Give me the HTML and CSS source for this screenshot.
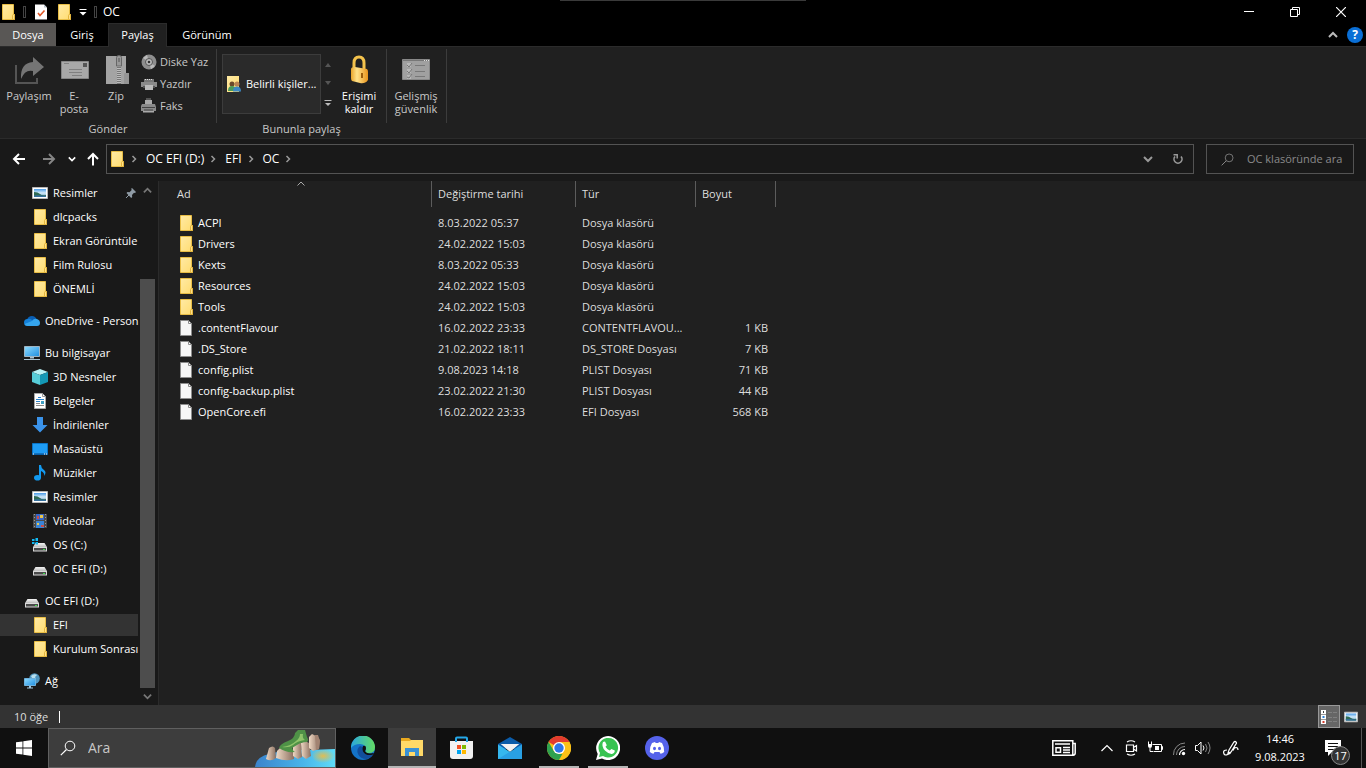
FILE: index.html
```
<!DOCTYPE html>
<html lang="tr">
<head>
    <meta charset="UTF-8">
    <meta name="viewport" content="width=device-width, initial-scale=1.0">
    <title>OC</title>
    <link rel="stylesheet" href="styles.css">
</head>
<body>
    <!-- Shared icons -->
    <svg class="sprite" aria-hidden="true">
        <defs>
            <linearGradient id="gFolder" x1="0" y1="0" x2="1" y2="1">
                <stop offset="0" stop-color="#ffeaa5"/><stop offset="1" stop-color="#ffdc70"/>
            </linearGradient>
            <linearGradient id="gScreen" x1="0" y1="0" x2="1" y2="1">
                <stop offset="0" stop-color="#8fdcff"/><stop offset="1" stop-color="#1e8ee0"/>
            </linearGradient>
            <linearGradient id="gSky" x1="0" y1="0" x2="0" y2="1">
                <stop offset="0" stop-color="#4a9be8"/><stop offset="0.5" stop-color="#d5ecfa"/><stop offset="1" stop-color="#5b93b8"/>
            </linearGradient>
            <linearGradient id="gLock" x1="0" y1="0" x2="1" y2="0">
                <stop offset="0" stop-color="#e9a52b"/><stop offset="0.35" stop-color="#ffe28a"/><stop offset="1" stop-color="#e8941c"/>
            </linearGradient>
            <linearGradient id="gDrive" x1="0" y1="0" x2="0" y2="1">
                <stop offset="0" stop-color="#f4f4f4"/><stop offset="1" stop-color="#bdbdbd"/>
            </linearGradient>
        </defs>
        <symbol id="folder" viewBox="0 0 16 16">
            <path d="M2.500.5h11v10h.9v5H2.500z" fill="url(#gFolder)" stroke="#e8bd45"/>
            <path d="M12.500 15.500v-4q0-1 1-1h1v5z" fill="#ffe08a" stroke="#e3b53c"/>
        </symbol>
        <symbol id="file" viewBox="0 0 16 16">
            <path d="M2.500.5h8l3 3v12h-11z" fill="#f7f7f7" stroke="#8d8d8d"/>
            <path d="M10.500.5v3h3z" fill="#fff" stroke="#8d8d8d"/>
        </symbol>
        <symbol id="picture" viewBox="0 0 16 16">
            <path d="M.5 2.500h15v11H.5z" fill="#fff" stroke="#b8b8b8"/>
            <path d="M2 4h12v8H2z" fill="url(#gSky)"/>
            <path d="M2 7q4 0 6 2t6 1v2H2z" fill="#2f6b55"/>
            <path d="M2 10.500q5-.5 12 .5v1H2z" fill="#346f9d"/>
        </symbol>
        <symbol id="drive" viewBox="0 0 16 16">
            <path d="M3.500 6h9l2.500 4H1z" fill="url(#gDrive)"/>
            <path d="M1 10h14v4.500H1z" fill="#d9d9d9"/>
            <path d="M2 11h12v2.500H2z" fill="#4a4a4a"/>
            <path d="M11 12h2v1h-2z" fill="#3fe04b"/>
        </symbol>
        <symbol id="chevron" viewBox="0 0 8 8">
            <path d="M2.500 1l3 3-3 3" fill="none" stroke="currentColor" stroke-width="1.500"/>
        </symbol>
        <symbol id="search" viewBox="0 0 16 16">
            <circle cx="10" cy="6" r="4.800" fill="none" stroke="currentColor"/>
            <path d="M6.500 9.500L.8 15.200" stroke="currentColor" stroke-width="1.200"/>
        </symbol>
        <symbol id="up" viewBox="0 0 10 10">
            <path d="M1 7l4-4 4 4" fill="none" stroke="currentColor" stroke-width="2"/>
        </symbol>
        <symbol id="down" viewBox="0 0 10 10">
            <path d="M1 3l4 4 4-4" fill="none" stroke="currentColor" stroke-width="2"/>
        </symbol>
    </svg>

    <header class="titlebar">
        <div class="quick-access">
            <svg class="icon"><use href="#folder"/></svg>
            <span class="divider"></span>
            <button class="plain" aria-label="Özellikler">
                <svg class="icon" viewBox="0 0 16 16">
                    <path d="M2 .5h9l3 3v12H2z" fill="#fff"/><path d="M11 .5v3h3z" fill="#b9c4cc"/>
                    <path d="M5 9l2 2.500 4.500-5" fill="none" stroke="#e0592a" stroke-width="1.600"/>
                </svg>
            </button>
            <button class="plain" aria-label="Yeni klasör"><svg class="icon"><use href="#folder"/></svg></button>
            <button class="plain" aria-label="Özelleştir">
                <svg width="8" height="8" viewBox="0 0 8 8"><path d="M.5 1.500h7" stroke="#fff"/><path d="M.5 4h7L4 7.500z" fill="#fff"/></svg>
            </button>
            <span class="divider"></span>
        </div>
        <h1>OC</h1>
        <div class="window-buttons">
            <button class="plain" aria-label="Simge durumuna küçült"><svg width="10" height="10" viewBox="0 0 10 10"><path d="M0 4.500h10" stroke="#fff"/></svg></button>
            <button class="plain" aria-label="Geri yükle"><svg width="10" height="10" viewBox="0 0 10 10"><path d="M.5 2.500h7v7h-7zM2.500 2.500v-2h7v7h-2" fill="none" stroke="#fff"/></svg></button>
            <button class="plain" aria-label="Kapat"><svg width="10" height="10" viewBox="0 0 10 10"><path d="M0 0l10 10M10 0L0 10" stroke="#fff" stroke-width="1.200"/></svg></button>
        </div>
    </header>

    <nav class="tabs">
        <button class="tab tab-file">Dosya</button>
        <button class="tab tab-home">Giriş</button>
        <button class="tab tab-share active">Paylaş</button>
        <button class="tab tab-view">Görünüm</button>
        <div class="tab-tools">
            <button class="plain" aria-label="Şeridi küçült"><svg width="10" height="10"><use href="#up"/></svg></button>
            <button class="plain help" aria-label="Yardım">?</button>
        </div>
    </nav>

    <section class="ribbon">
        <div class="group group-send">
            <div class="group-body">
                <button class="big share">
                    <svg class="icon-big" viewBox="0 0 32 32">
                        <path d="M3 11v18h21v-5" fill="none" stroke="#555" stroke-width="2"/>
                        <path d="M20 3l11 10-11 9v-5Q12 15 8 25q-1-16 12-17z" fill="#757575"/>
                    </svg>
                    <span>Paylaşım</span>
                </button>
                <button class="big mail">
                    <svg class="icon-big" viewBox="0 0 32 32">
                        <path d="M3.500 7.500h27v17h-27z" fill="#a8a8a8" stroke="#858585"/>
                        <path d="M25 9h4v4h-4z" fill="#555"/>
                        <path d="M6 9.500h5M11 15.500h13M11 18.500h13M14 21.500h10" stroke="#808080"/>
                    </svg>
                    <span>E-<br>posta</span>
                </button>
                <button class="big zip">
                    <svg class="icon-big" viewBox="0 0 32 32">
                        <path d="M6 2h20v17h3v11H6z" fill="#a4a4a4"/>
                        <path d="M24 30V20q0-1 1-1h4v11z" fill="#959595"/>
                        <path d="M17 2h4v28h-4z" fill="#777"/>
                        <path d="M19 12v18" stroke="#bbb" stroke-width="4" stroke-dasharray="1 1"/>
                        <path d="M16.500 12V3.500q0-2 2.500-2t2.500 2V12z" fill="#999" stroke="#666"/>
                        <path d="M19 4v4" stroke="#555"/>
                    </svg>
                    <span>Zip</span>
                </button>
                <div class="small-buttons">
                    <button class="small">
                        <svg class="icon" viewBox="0 0 16 16">
                            <circle cx="8" cy="8" r="7.500" fill="#8e8e8e"/><path d="M8 8L2 4l4-3zM8 8l6 4-4 3z" fill="#bbb"/>
                            <circle cx="8" cy="8" r="3.500" fill="#bbb" stroke="#555"/><circle cx="8" cy="8" r="1.300" fill="#333"/>
                        </svg>
                        Diske Yaz
                    </button>
                    <button class="small">
                        <svg class="icon" viewBox="0 0 16 16">
                            <path d="M3 3h10v3H3z" fill="#777"/><path d="M4 3.500h8" stroke="#ddd" stroke-dasharray="1 1"/>
                            <path d="M0 6h16v5H0z" fill="#8a8a8a"/><path d="M2 10h12v2H2z" fill="#555"/><path d="M4 9h8v5H4z" fill="#bbb"/>
                        </svg>
                        Yazdır
                    </button>
                    <button class="small">
                        <svg class="icon" viewBox="0 0 16 16">
                            <path d="M4 2h7v5H4z" fill="#aaa"/><path d="M5 1h5" stroke="#888"/>
                            <path d="M1 6h13l1 3v4H0V8z" fill="#8a8a8a"/><path d="M1 9.500h13M3 12h9" stroke="#444"/>
                            <path d="M2 13h11v1.500H2z" fill="#aaa"/>
                        </svg>
                        Faks
                    </button>
                </div>
            </div>
            <div class="group-title">Gönder</div>
        </div>
        <div class="group group-share">
            <div class="group-body">
                <div class="gallery">
                    <button class="gallery-item">
                        <svg class="icon" viewBox="0 0 16 16">
                            <path d="M1 0h12v16H1z" fill="url(#gFolder)"/>
                            <circle cx="6" cy="8" r="2.500" fill="#6b4a2b"/><path d="M2 15q0-5 4-5t4 5z" fill="#4a9a5c"/>
                            <circle cx="11" cy="8" r="2.500" fill="#b98352"/><path d="M7 15.500q0-5 4-5t4 5z" fill="#3d89c4"/>
                        </svg>
                        Belirli kişiler...
                    </button>
                    <div class="gallery-scroll">
                        <svg width="6" height="4" viewBox="0 0 6 4"><path d="M0 4h6L3 0z" fill="#555"/></svg>
                        <svg width="6" height="4" viewBox="0 0 6 4"><path d="M0 0h6L3 4z" fill="#555"/></svg>
                        <svg width="8" height="8" viewBox="0 0 8 8"><path d="M.5 1.500h7" stroke="#bbb"/><path d="M1 4h6L4 7z" fill="#bbb"/></svg>
                    </div>
                </div>
                <button class="big unlock">
                    <svg class="icon-big" viewBox="0 0 32 32">
                        <path d="M11 15V9q0-6 5-6t5 6v8" fill="none" stroke="#f3c24c" stroke-width="3"/>
                        <path d="M8 15q0-2 4-2l12 2q1 1 1 3v8q-3 4-8 3l-8-2q-1-1-1-3z" fill="url(#gLock)"/>
                        <path d="M19 19v5" stroke="#9b5d0b" stroke-width="2"/>
                    </svg>
                    <span>Erişimi kaldır</span>
                </button>
            </div>
            <div class="group-title">Bununla paylaş</div>
        </div>
        <div class="group group-security">
            <div class="group-body">
                <button class="big security">
                    <svg class="icon-big" viewBox="0 0 32 32">
                        <path d="M2.500 5.500h27v20h-27z" fill="#a0a0a0" stroke="#888"/>
                        <path d="M3 6.500h26" stroke="#777"/><path d="M24 6.500h5" stroke="#ddd" stroke-dasharray="1 1"/>
                        <path d="M7 9h4v4H7zM7 15h4v4H7zM7 21h4v4H7z" fill="#b8b8b8"/>
                        <path d="M7 11l2 2 3-4M7 17l2 2 3-4M7 23l2 1 3-4M15 11.500h10M15 17.500h10M15 22.500h10" fill="none" stroke="#787878"/>
                    </svg>
                    <span>Gelişmiş güvenlik</span>
                </button>
            </div>
        </div>
    </section>

    <section class="address-row">
        <div class="nav-buttons">
            <button class="plain" aria-label="Geri"><svg width="14" height="14" viewBox="0 0 14 14"><path d="M13 7H2M7 2L2 7l5 5" fill="none" stroke="#fff" stroke-width="2"/></svg></button>
            <button class="plain" aria-label="İleri"><svg width="14" height="14" viewBox="0 0 14 14"><path d="M1 7h11M7 2l5 5-5 5" fill="none" stroke="#858585" stroke-width="2"/></svg></button>
            <button class="plain recent" aria-label="Son konumlar"><svg width="8" height="8"><use href="#down"/></svg></button>
            <button class="plain" aria-label="Yukarı"><svg width="14" height="14" viewBox="0 0 14 14"><path d="M7 13.500V2M2 7l5-5 5 5" fill="none" stroke="#fff" stroke-width="2"/></svg></button>
        </div>
        <div class="address">
            <svg class="icon"><use href="#folder"/></svg>
            <svg class="sep"><use href="#chevron"/></svg>
            <a href="#">OC EFI (D:)</a>
            <svg class="sep"><use href="#chevron"/></svg>
            <a href="#">EFI</a>
            <svg class="sep"><use href="#chevron"/></svg>
            <a href="#">OC</a>
            <svg class="sep"><use href="#chevron"/></svg>
            <div class="address-tools">
                <button class="plain" aria-label="Önceki konumlar"><svg width="10" height="10"><use href="#down"/></svg></button>
                <button class="plain" aria-label="Yenile"><svg width="12" height="12" viewBox="0 0 12 12"><path d="M9 3.500A4 4 0 1 1 3 3.500" fill="none" stroke="#999" stroke-width="1.600"/><path d="M1.500 1.800h3.700v3.700" fill="none" stroke="#999" stroke-width="1.500"/></svg></button>
            </div>
        </div>
        <label class="folder-search">
            <svg width="13" height="13"><use href="#search"/></svg>
            <input type="text" placeholder="OC klasöründe ara" aria-label="OC klasöründe ara">
        </label>
    </section>

    <main class="explorer">
        <aside class="sidebar">
            <div class="tree">
                <a class="node sub" href="#"><svg class="icon"><use href="#picture"/></svg><span>Resimler</span>
                    <svg class="pin" viewBox="0 0 12 12"><path d="M7 1l4 4-1 1-1-.3L7 8l.2 2-1 1L1.500 6l1-1 2 .2L6.700 3 6.200 1.800z" fill="#8f9ba5"/><path d="M4 8L1 11" stroke="#8f9ba5"/></svg>
                </a>
                <a class="node sub" href="#"><svg class="icon"><use href="#folder"/></svg><span>dlcpacks</span></a>
                <a class="node sub" href="#"><svg class="icon"><use href="#folder"/></svg><span>Ekran Görüntüle</span></a>
                <a class="node sub" href="#"><svg class="icon"><use href="#folder"/></svg><span>Film Rulosu</span></a>
                <a class="node sub" href="#"><svg class="icon"><use href="#folder"/></svg><span>ÖNEMLİ</span></a>
                <a class="node root" href="#">
                    <svg class="icon" viewBox="0 0 16 16"><path d="M3 7q1-4 5-4 3 0 4.500 3L9 11H3z" fill="#0a5fb4"/><path d="M3.500 6Q6 5 8 7l4 3-3 3H3.500Q0 13 0 9.500T3.500 6z" fill="#1480d8"/><path d="M8 8q2-3 5-2 3 1 3 4 0 3-3 3H3.500q-2 0-3-2z" fill="#35a5ee"/></svg>
                    <span>OneDrive - Person</span>
                </a>
                <a class="node root" href="#">
                    <svg class="icon" viewBox="0 0 16 16"><path d="M.5 1.500h15v10H.5z" fill="url(#gScreen)" stroke="#9fb4c2"/><path d="M6 12h4v1.500H6zM0 14h16v1H0z" fill="#a9c3d3"/></svg>
                    <span>Bu bilgisayar</span>
                </a>
                <a class="node sub" href="#">
                    <svg class="icon" viewBox="0 0 16 16"><path d="M0 3l8-3 8 3-8 3z" fill="#b8f2f5"/><path d="M0 3l8 3v10l-8-3z" fill="#57cdd8"/><path d="M16 3L8 6v10l8-3z" fill="#1498b5"/></svg>
                    <span>3D Nesneler</span>
                </a>
                <a class="node sub" href="#">
                    <svg class="icon" viewBox="0 0 16 16"><path d="M2.500.5h8l3 3v12h-11z" fill="#fff" stroke="#aaa"/><path d="M10.500.5v3h3" fill="none" stroke="#999"/><path d="M6 4.500h3M4 6.500h8M4 8.500h4" stroke="#2c84cc"/><path d="M4 10.500h4M4 12.500h8" stroke="#888"/><path d="M9 8h3v3H9z" fill="#3d9fc4"/></svg>
                    <span>Belgeler</span>
                </a>
                <a class="node sub" href="#">
                    <svg class="icon" viewBox="0 0 16 16"><path d="M5 0h6v8h4.500L8 15.500.5 8H5z" fill="#3a93ea"/></svg>
                    <span>İndirilenler</span>
                </a>
                <a class="node sub" href="#">
                    <svg class="icon" viewBox="0 0 16 16"><path d="M.5 2.500h15v11H.5z" fill="#1e9cf5" stroke="#0a74c6"/><path d="M1 13h14" stroke="#064b8a"/><path d="M1 13h1M12 13h1M14 13h1" stroke="#fff"/></svg>
                    <span>Masaüstü</span>
                </a>
                <a class="node sub" href="#">
                    <svg class="icon" viewBox="0 0 16 16"><ellipse cx="5.500" cy="12.800" rx="3.500" ry="2.800" fill="#129af0"/><path d="M7 0h2q0 3 3 5t0 6q1-3-3-5v7H7z" fill="#129af0"/></svg>
                    <span>Müzikler</span>
                </a>
                <a class="node sub" href="#"><svg class="icon"><use href="#picture"/></svg><span>Resimler</span></a>
                <a class="node sub" href="#">
                    <svg class="icon" viewBox="0 0 16 16"><path d="M1 1h14v14H1z" fill="#4a4a4a"/><path d="M2.500 1v14M13.500 1v14" stroke="#999" stroke-dasharray="1 2"/><path d="M4 1h8v6H4z" fill="#3566c8"/><path d="M4 8h8v7H4z" fill="#3a84d6"/><path d="M5 3h2v3H5zM9 12h3v2H9z" fill="#c94d4a"/><path d="M8 2h3v3H8zM5 10h2v2H5z" fill="#e8c64d"/></svg>
                    <span>Videolar</span>
                </a>
                <a class="node sub" href="#">
                    <svg class="icon" viewBox="0 0 16 16"><path d="M3.500 6h9l2.500 4H1z" fill="url(#gDrive)"/><path d="M1 10h14v4.500H1z" fill="#d9d9d9"/><path d="M2 11h12v2.500H2z" fill="#4a4a4a"/><path d="M11 12h2v1h-2z" fill="#3fe04b"/><path d="M0 2h2.500v2H0zM3.500 1H6v3H3.500zM0 5h2.500v2H0zM3.500 5H6v2.500H3.500z" fill="#12b8f2"/></svg>
                    <span>OS (C:)</span>
                </a>
                <a class="node sub" href="#"><svg class="icon"><use href="#drive"/></svg><span>OC EFI (D:)</span></a>
                <a class="node root" href="#"><svg class="icon"><use href="#drive"/></svg><span>OC EFI (D:)</span></a>
                <a class="node sub selected" href="#"><svg class="icon"><use href="#folder"/></svg><span>EFI</span></a>
                <a class="node sub" href="#"><svg class="icon"><use href="#folder"/></svg><span>Kurulum Sonrası</span></a>
                <a class="node root" href="#">
                    <svg class="icon" viewBox="0 0 16 16"><circle cx="10.500" cy="5.500" r="5.300" fill="#4f94bd"/><path d="M7 3q3-3 6-1l-2 2 1 2-3 1z" fill="#b9dfee"/><path d="M.5 5.500h11v7H.5z" fill="url(#gScreen)" stroke="#6fb1dc"/><path d="M5 13h2v1.500H5zM3 14.500h6v1H3z" fill="#9fc6de"/></svg>
                    <span>Ağ</span>
                </a>
            </div>
            <div class="scrollbar">
                <svg width="9" height="9"><use href="#up"/></svg>
                <div class="track"><div class="thumb"></div></div>
                <svg width="9" height="9"><use href="#down"/></svg>
            </div>
        </aside>

        <div class="files">
            <table>
                <colgroup><col class="c-name"><col class="c-date"><col class="c-type"><col class="c-size"></colgroup>
                <thead>
                    <tr><th>Ad<svg class="sort" viewBox="0 0 8 5"><path d="M.5 4.500L4 1l3.500 3.500" fill="none" stroke="#aaa"/></svg></th><th>Değiştirme tarihi</th><th>Tür</th><th>Boyut</th></tr>
                </thead>
                <tbody>
                    <tr><td><svg class="icon"><use href="#folder"/></svg>ACPI</td><td>8.03.2022 05:37</td><td>Dosya klasörü</td><td></td></tr>
                    <tr><td><svg class="icon"><use href="#folder"/></svg>Drivers</td><td>24.02.2022 15:03</td><td>Dosya klasörü</td><td></td></tr>
                    <tr><td><svg class="icon"><use href="#folder"/></svg>Kexts</td><td>8.03.2022 05:33</td><td>Dosya klasörü</td><td></td></tr>
                    <tr><td><svg class="icon"><use href="#folder"/></svg>Resources</td><td>24.02.2022 15:03</td><td>Dosya klasörü</td><td></td></tr>
                    <tr><td><svg class="icon"><use href="#folder"/></svg>Tools</td><td>24.02.2022 15:03</td><td>Dosya klasörü</td><td></td></tr>
                    <tr><td><svg class="icon"><use href="#file"/></svg>.contentFlavour</td><td>16.02.2022 23:33</td><td>CONTENTFLAVOU...</td><td>1 KB</td></tr>
                    <tr><td><svg class="icon"><use href="#file"/></svg>.DS_Store</td><td>21.02.2022 18:11</td><td>DS_STORE Dosyası</td><td>7 KB</td></tr>
                    <tr><td><svg class="icon"><use href="#file"/></svg>config.plist</td><td>9.08.2023 14:18</td><td>PLIST Dosyası</td><td>71 KB</td></tr>
                    <tr><td><svg class="icon"><use href="#file"/></svg>config-backup.plist</td><td>23.02.2022 21:30</td><td>PLIST Dosyası</td><td>44 KB</td></tr>
                    <tr><td><svg class="icon"><use href="#file"/></svg>OpenCore.efi</td><td>16.02.2022 23:33</td><td>EFI Dosyası</td><td>568 KB</td></tr>
                </tbody>
            </table>
        </div>
    </main>

    <div class="statusbar">
        <span class="count">10 öğe</span>
        <div class="views">
            <button class="view-button active" aria-label="Ayrıntılar">
                <svg class="icon" viewBox="0 0 16 16"><path d="M0 1h5v14H0z" fill="#fff"/><path d="M0 5.500h5M0 10.500h5" stroke="#999"/><path d="M2 2h1v2H2z" fill="#444"/><path d="M1.500 7h2v2h-2z" fill="#2a7fd4"/><path d="M1.500 12h2v2h-2z" fill="#d43a2a"/><path d="M7 3.500h9M7 8.500h9M7 12.500h9" stroke="#808080" stroke-dasharray="4 1"/></svg>
            </button>
            <button class="view-button" aria-label="Büyük simgeler"><svg width="14" height="14"><use href="#picture"/></svg></button>
        </div>
    </div>

    <footer class="taskbar">
        <button class="start" aria-label="Başlat">
            <svg class="icon" viewBox="0 0 16 16"><path d="M0 2.300l6.500-.9v6.200H0zM7.300 1.300L16 0v7.600H7.300zM0 8.400h6.500v6.200L0 13.700zM7.300 8.400H16V16l-8.700-1.300z" fill="#fff"/></svg>
        </button>
        <label class="task-search">
            <svg class="icon"><use href="#search"/></svg>
            <input type="text" placeholder="Ara" aria-label="Ara">
            <svg class="island" viewBox="0 0 80 38">
                <defs>
                    <linearGradient id="gSea" x1="0" y1="0" x2="1" y2="0"><stop offset="0" stop-color="#3b83cb"/><stop offset="0.6" stop-color="#49b5ea"/><stop offset="1" stop-color="#5fdcf8"/></linearGradient>
                    <radialGradient id="gSun"><stop offset="0" stop-color="#e0bd52"/><stop offset="1" stop-color="#e0bd52" stop-opacity="0"/></radialGradient>
                    <linearGradient id="gRock" x1="0" y1="0" x2="1" y2="0"><stop offset="0" stop-color="#f0d9c4"/><stop offset="1" stop-color="#8a6f60"/></linearGradient>
                </defs>
                <path d="M0 38Q1 28 14 25q20-5 40-4l26-1v18z" fill="url(#gSea)"/>
                <path d="M56 22l24-2v14H60z" fill="url(#gSun)"/>
                <path d="M11 30l3-11q4-3 6 0l1 10q-5 4-10 1z" fill="url(#gRock)"/>
                <path d="M21 29l1-7 5-5 6 1 6 5 0 7q-8 3-18-1z" fill="url(#gRock)"/>
                <path d="M38 17l4-3 4 0 1 14-4 2-5-3z" fill="url(#gRock)"/>
                <path d="M46 14l4-2 4 2 2 13-5 3-4-3z" fill="url(#gRock)"/>
                <path d="M54 8l3-3 4 2 4 4-1 9-6 2-4-3z" fill="url(#gRock)"/>
                <path d="M60 6l3 0 2 6-1 8-3 1z" fill="#a28372"/>
                <path d="M24 19q1-4 9-7 7-3 7-8l3-3h7l2 7q2 3 0 5-6 0-10 3l-5 3q1 3 3 4-9 1-16-4z" fill="#4f9247"/>
                <path d="M27 18q9-1 14-6 4-3 4-7l3 0q-1 4 2 6-8 1-12 5-4 3-11 2z" fill="#8fc56a"/>
            </svg>
        </label>
        <div class="apps">
            <button class="app" aria-label="Microsoft Edge">
                <svg class="app-icon" viewBox="0 0 24 24">
                    <defs><linearGradient id="gEdge" x1="0" y1="0" x2="1" y2="0"><stop offset="0" stop-color="#2aa7df"/><stop offset="1" stop-color="#63dc62"/></linearGradient></defs>
                    <circle cx="12" cy="12" r="12" fill="#1473c8"/>
                    <path d="M0 12A12 12 0 0 1 24 11q0 6-6 6-5 0-3-3 0-6-6-6-6 0-9 4z" fill="url(#gEdge)"/>
                    <path d="M9 10q-4 3-2 8t9 5q4-1 6-5-4 2-8 0-4-3-2-7z" fill="#124e9c"/>
                    <path d="M12 10q3-1 3 2 0 2-1 3 1 2 5 2.500l4-.5-1 1.500q-4 1-7 0-5-2.500-3-8.500z" fill="#101010"/>
                </svg>
            </button>
            <button class="app current" aria-label="Dosya Gezgini">
                <svg class="app-icon" viewBox="0 0 24 24"><path d="M1 2h8l2 2h12v14H1z" fill="#e9a91f"/><path d="M1 5h9l1-1h12v16H1z" fill="#ffd968"/><path d="M5 12h14v8h-4v-4H9v4H5z" fill="#3a91d4"/></svg>
            </button>
            <button class="app" aria-label="Microsoft Store">
                <svg class="app-icon" viewBox="0 0 24 24"><path d="M1 5h23v15q0 3-3 3H4q-3 0-3-3z" fill="#f1f1f1"/><path d="M7 6V2.500q0-1 1-1h9q1 0 1 1V6" fill="none" stroke="#25a8e8" stroke-width="2"/><path d="M8 9h4v4H8z" fill="#f25022"/><path d="M13 9h4v4h-4z" fill="#7fba00"/><path d="M8 14h4v4H8z" fill="#00a4ef"/><path d="M13 14h4v4h-4z" fill="#ffb900"/></svg>
            </button>
            <button class="app" aria-label="Posta">
                <svg class="app-icon" viewBox="0 0 24 24"><path d="M0 8l12-7 12 7v5H0z" fill="#0b5ca9"/><path d="M3 8h18l-9 8z" fill="#f2f2f2"/><path d="M0 8.500l12 7.500 12-7.500V23H0z" fill="#35b7ee"/><path d="M3 8h18l-9 7z" fill="#f2f2f2"/><path d="M24 8.500L0 23h24z" fill="#2291dd" opacity="0.6"/></svg>
            </button>
            <button class="app running" aria-label="Google Chrome">
                <svg class="app-icon" viewBox="0 0 24 24"><circle cx="12" cy="12" r="12" fill="#fbc116"/><path d="M12 12L1.600 6A12 12 0 0 1 22.400 6z" fill="#e33b2e"/><path d="M12 6h10.400A12 12 0 0 1 12 24l5.200-9z" fill="#fbc116"/><path d="M1.600 6l5.200 9 5.200 3h3.400L12 24A12 12 0 0 1 1.600 6z" fill="#2ea14f"/><circle cx="12" cy="12" r="6" fill="#fff"/><circle cx="12" cy="12" r="4.700" fill="#2f76e8"/></svg>
            </button>
            <button class="app running" aria-label="WhatsApp">
                <svg class="app-icon" viewBox="0 0 24 24"><path d="M0 24l1.700-6A12 12 0 1 1 6 22.400z" fill="#fff"/><path d="M3 21l1-4A9.800 9.800 0 1 1 7 20z" fill="#38c351"/><path d="M7 6l2-.5 1.800 3.700-1.300 1.600q1.500 2.700 4.200 3.800l1.700-1.700 3.400 1.700q0 3-3 3.400-3 .2-6.600-3.300Q5 10.500 7 6z" fill="#fff"/></svg>
            </button>
            <button class="app" aria-label="Discord">
                <svg class="app-icon" viewBox="0 0 24 24"><circle cx="12" cy="12" r="12" fill="#5562ea"/><path d="M7 7l3-1 .7 1h2.600l.7-1 3 1q2.500 4 2.200 9-2 1.500-3.700 1.700l-1-1.700h-5l-1 1.700Q7 17.500 4.800 16 4.500 11 7 7z" fill="#fff"/><ellipse cx="9.500" cy="12.500" rx="1.500" ry="1.700" fill="#5562ea"/><ellipse cx="14.500" cy="12.500" rx="1.500" ry="1.700" fill="#5562ea"/></svg>
            </button>
        </div>
        <div class="tray">
            <button class="plain news" aria-label="Haberler">
                <svg width="24" height="16" viewBox="0 0 24 16"><path d="M.8.800h20v14.400H.8zM21 3.500h2.200v9.500q0 2-2 2.200" fill="none" stroke="#fff" stroke-width="1.500"/><path d="M3 4h15M11 7.500h7M11 10h7M11 12.500h7" stroke="#fff" stroke-width="1.300"/><path d="M4 7.700h4.500v4.600H4z" fill="none" stroke="#fff" stroke-width="1.500"/></svg>
            </button>
            <button class="plain" aria-label="Gizli simgeler"><svg width="12" height="8" viewBox="0 0 12 8"><path d="M.5 7L6 1.500 11.500 7" fill="none" stroke="#fff" stroke-width="1.200"/></svg></button>
            <button class="plain" aria-label="Kamera"><svg class="icon" viewBox="0 0 16 16"><path d="M3.500 5h7v6.500h-7zM10.500 7.500L13.500 5.500v5.500l-3-2M4 2q4-2.500 8 0M4 14q4 2.500 8 0" fill="none" stroke="#fff" stroke-width="1.200"/></svg></button>
            <button class="plain" aria-label="Pil"><svg class="icon" viewBox="0 0 16 16"><path d="M5.500 4.500h9v7h-8M14.500 6.500h1v3h-1" fill="none" stroke="#fff"/><path d="M8 6h4v4H8z" fill="#fff"/><path d="M1 4h4v2q0 2-2 2T1 6z" fill="#fff"/><path d="M1.500 1.500V4M4.500 1.500V4M3 8v3.500h3" fill="none" stroke="#fff"/></svg></button>
            <button class="plain" aria-label="Ağ"><svg class="icon" viewBox="0 0 16 16"><path d="M2.500 15A11.500 11.500 0 0 1 14 3M5.500 15A8.500 8.500 0 0 1 14 6.500" fill="none" stroke="#888"/><path d="M8.500 15A5.500 5.500 0 0 1 14 9.500" fill="none" stroke="#fff" stroke-width="1.200"/><circle cx="12.500" cy="13.500" r="1.700" fill="#fff"/></svg></button>
            <button class="plain" aria-label="Ses"><svg class="icon" viewBox="0 0 16 16"><path d="M.5 5.500h2L6 2v12l-3.500-3.500h-2z" fill="none" stroke="#fff"/><path d="M8 5.500q2 2.500 0 5" fill="none" stroke="#fff"/><path d="M10.500 4q3 4 0 8M13 2q4 6 0 12" fill="none" stroke="#888"/></svg></button>
            <button class="plain pen" aria-label="Kalem"><svg class="icon" viewBox="0 0 16 16"><path d="M6 10l5-8q1-1 2 0t0 2L8 12l-3 1zM4 10Q0 10 .7 13t4 1.500q3-1 4-3.500M10 10.500q1-3 3-3t2 2.500" fill="none" stroke="#fff" stroke-width="1.200"/></svg></button>
            <div class="clock"><time>14:46</time><time>9.08.2023</time></div>
            <button class="plain notifications" aria-label="Bildirimler">
                <svg class="icon" viewBox="0 0 16 16"><path d="M0 0h16v12H7l-4 4v-4H0z" fill="#fff"/><path d="M3 3.500h10M3 6.500h10M3 9.500h7" stroke="#101010"/></svg>
                <span class="badge">17</span>
            </button>
            <span class="show-desktop"></span>
        </div>
    </footer>
</body>
</html>
```

FILE: styles.css
```
* {
    margin: 0;
    padding: 0;
    box-sizing: border-box;
}

body {
    display: flex;
    flex-direction: column;
    min-height: 100vh;
    background: #191919;
    color: #fff;
    font-family: 'Open Sans', 'Noto Sans', sans-serif;
    font-size: 11px;
    line-height: 16px;
}

button,
input {
    font: inherit;
    color: inherit;
    background: none;
    border: none;
    outline: none;
}

a {
    color: inherit;
    text-decoration: none;
}

svg {
    display: block;
    flex-shrink: 0;
}

.sprite {
    position: absolute;
    width: 0;
    height: 0;
}

.icon {
    width: 16px;
    height: 16px;
}

.plain {
    display: flex;
    align-items: center;
    justify-content: center;
}

/* Title bar */
.titlebar {
    position: relative;
    display: flex;
    align-items: center;
    height: 23px;
    background: #000;
}

.titlebar::before {
    content: '';
    position: absolute;
    top: 0;
    left: 41%;
    width: 18%;
    height: 1px;
    background: #3a3a3a;
}

.quick-access {
    display: flex;
    align-items: center;
    gap: 7px;
}

.divider {
    width: 3px;
    height: 12px;
    border: 1px solid #444;
}

.titlebar h1 {
    margin-left: 6px;
    font-size: 12px;
    font-weight: normal;
}

.window-buttons {
    display: flex;
    margin-left: auto;
    padding-right: 2px;
}

.window-buttons .plain {
    width: 46px;
    height: 20px;
}

/* Ribbon tabs */
.tabs {
    display: flex;
    height: 24px;
    background: #000;
    border-bottom: 1px solid #2b2b2b;
}

.tab {
    height: 24px;
}

.tab-file {
    width: 56px;
    height: 23px;
    background: #595755;
}

.tab-home {
    width: 52px;
}

.tab-share {
    width: 59px;
}

.tab-view {
    width: 80px;
}

.tab.active {
    padding-bottom: 2px;
    background: #202020;
    border: 1px solid #2b2b2b;
    border-bottom: none;
}

.tab-tools {
    display: flex;
    align-items: center;
    gap: 9px;
    margin-left: auto;
    padding-right: 3px;
    color: #bbb;
}

.help {
    width: 16px;
    height: 16px;
    border-radius: 50%;
    background: #0a6fd6;
    color: #fff;
    font-size: 12px;
    font-weight: bold;
}

/* Ribbon */
.ribbon {
    display: flex;
    height: 92px;
    background: #202020;
    border-bottom: 1px solid #2b2b2b;
    color: #c8c8c8;
}

.group {
    display: flex;
    flex-direction: column;
    height: 74px;
    margin-top: 2px;
    border-right: 1px solid #3c3c3c;
}

.group-send {
    width: 217px;
}

.group-share {
    width: 170px;
}

.group-security {
    width: 60px;
}

.group-body {
    display: flex;
    height: 72px;
    flex-shrink: 0;
}

.group-title {
    text-align: center;
}

.big {
    display: flex;
    flex-direction: column;
    align-items: center;
    gap: 3px;
    padding-top: 5px;
    line-height: 13px;
}

.icon-big {
    width: 32px;
    height: 32px;
}

.share {
    width: 50px;
    margin-left: 4px;
}

.mail {
    width: 40px;
}

.zip {
    width: 44px;
}

.small-buttons {
    display: flex;
    flex-direction: column;
    margin-left: 3px;
    padding-top: 2px;
}

.small {
    display: flex;
    align-items: center;
    gap: 3px;
    height: 22px;
}

.gallery {
    display: flex;
    width: 112px;
    height: 60px;
    margin: 5px 0 0 5px;
}

.gallery-item {
    display: flex;
    align-items: center;
    gap: 4px;
    width: 99px;
    padding-left: 3px;
    background: #2a2a2a;
    border: 1px solid #3c3c3c;
    color: #fff;
    white-space: nowrap;
}

.gallery-scroll {
    display: flex;
    flex-direction: column;
    align-items: center;
    justify-content: space-between;
    width: 13px;
    padding: 9px 0 7px;
}

.unlock {
    width: 50px;
    color: #fff;
}

.security {
    width: 58px;
}

/* Address row */
.address-row {
    display: flex;
    align-items: center;
    height: 40px;
    padding-right: 12px;
}

.nav-buttons {
    display: flex;
    align-items: center;
    gap: 16px;
    padding: 0 6px 0 12px;
}

.nav-buttons .recent {
    width: 8px;
    margin: 0 -6px 0 -4px;
}

.address {
    display: flex;
    flex: 1;
    align-items: center;
    height: 30px;
    padding-left: 2px;
    border: 1px solid #535353;
    font-size: 12px;
}

.sep {
    width: 8px;
    height: 8px;
    margin: 0 8px 0 5px;
    color: #999;
}

.address-tools {
    display: flex;
    align-items: stretch;
    height: 28px;
    margin-left: auto;
    color: #999;
}

.address-tools .plain {
    width: 30px;
}

.folder-search {
    display: flex;
    align-items: center;
    gap: 13px;
    width: 148px;
    height: 30px;
    margin-left: 12px;
    padding-left: 14px;
    border: 1px solid #535353;
    color: #8a8a8a;
}

.folder-search input {
    width: 100px;
}

input::placeholder {
    color: #8a8a8a;
    opacity: 1;
}

/* Explorer */
.explorer {
    display: flex;
    flex: 1;
    padding-top: 2px;
}

.sidebar {
    display: flex;
    width: 159px;
    border-right: 1px solid #2b2b2b;
}

.tree {
    width: 139px;
    overflow: hidden;
}

.node {
    display: flex;
    align-items: center;
    gap: 5px;
    height: 24px;
    white-space: nowrap;
}

.sub {
    padding-left: 32px;
}

.root {
    margin: 8px 0 0;
    padding-left: 24px;
}

.selected {
    height: 22px;
    margin: 1px 1px 1px 0;
    background: #333;
}

.pin {
    width: 12px;
    height: 12px;
    margin-left: auto;
    margin-right: 2px;
}

.scrollbar {
    display: flex;
    flex-direction: column;
    align-items: center;
    width: 17px;
    padding: 5px 0 4px;
    color: #777;
}

.track {
    display: flex;
    flex: 1;
    flex-direction: column;
    justify-content: flex-end;
    width: 15px;
    padding-bottom: 4px;
}

.thumb {
    height: 83%;
    background: #4d4d4d;
}

.files {
    flex: 1;
    padding-left: 1px;
    background: #202020;
}

table {
    table-layout: fixed;
    width: 616px;
    border-spacing: 0;
}

.c-name {
    width: 272px;
}

.c-date {
    width: 144px;
}

.c-type {
    width: 120px;
}

.c-size {
    width: 80px;
}

th {
    position: relative;
    height: 26px;
    padding-left: 6px;
    border-right: 1px solid #5c5c5c;
    color: #dedede;
    font-weight: normal;
    text-align: left;
}

th:first-child {
    padding-left: 17px;
}

.sort {
    position: absolute;
    top: 0;
    left: 137px;
    width: 8px;
    height: 5px;
}

tbody::before {
    content: '';
    display: block;
    height: 5px;
}

td {
    height: 21px;
    padding-left: 6px;
    color: #dedede;
    white-space: nowrap;
}

td:first-child {
    display: flex;
    align-items: center;
    gap: 4px;
    padding-left: 18px;
    color: #fff;
}

td:last-child {
    padding-right: 8px;
    text-align: right;
}

/* Status bar */
.statusbar {
    display: flex;
    align-items: center;
    justify-content: space-between;
    height: 23px;
    padding: 0 5px 0 14px;
    background: #333;
}

.count {
    height: 12px;
    padding-right: 11px;
    border-right: 1px solid #fff;
    color: #dedede;
    line-height: 12px;
}

.views {
    display: flex;
    gap: 1px;
}

.view-button {
    display: flex;
    align-items: center;
    justify-content: center;
    width: 20px;
    height: 23px;
}

.view-button.active {
    width: 22px;
    background: #666;
    border: 1px solid #999;
}

/* Taskbar */
.taskbar {
    display: flex;
    height: 40px;
    background: #101010;
}

.start {
    display: flex;
    align-items: center;
    justify-content: center;
    width: 48px;
}

.task-search {
    display: flex;
    align-items: center;
    gap: 12px;
    width: 288px;
    padding-left: 11px;
    background: #3d3d3d;
    border: 1px solid #606060;
    font-size: 14px;
}

.task-search input {
    flex: 1;
    min-width: 0;
}

.task-search input::placeholder {
    color: #c8c8c8;
}

.island {
    width: 80px;
    height: 38px;
}

.apps {
    display: flex;
    gap: 1px;
    margin-left: 3px;
}

.app {
    display: flex;
    align-items: center;
    justify-content: center;
    width: 48px;
}

.app-icon {
    width: 24px;
    height: 24px;
}

.app.current {
    background: #3d3d3d;
    box-shadow: inset 0 -2px #b5b5b5;
}

.app.running {
    background: linear-gradient(#b5b5b5, #b5b5b5) center bottom / 40px 2px no-repeat;
}

.tray {
    display: flex;
    align-items: center;
    margin-left: auto;
}

.tray .plain {
    width: 24px;
    height: 40px;
}

.tray .news {
    margin-right: 19px;
}

.tray .pen {
    width: 32px;
}

.clock {
    display: flex;
    flex-direction: column;
    align-items: center;
    width: 66px;
    line-height: 18px;
}

.tray .notifications {
    position: relative;
    width: 48px;
    padding-right: 8px;
}

.badge {
    position: absolute;
    top: 18px;
    left: 18px;
    width: 19px;
    height: 19px;
    border: 1px solid #888;
    border-radius: 50%;
    background: #333;
    line-height: 17px;
    text-align: center;
}

.show-desktop {
    width: 5px;
    height: 40px;
    border-left: 1px solid #555;
}
```
